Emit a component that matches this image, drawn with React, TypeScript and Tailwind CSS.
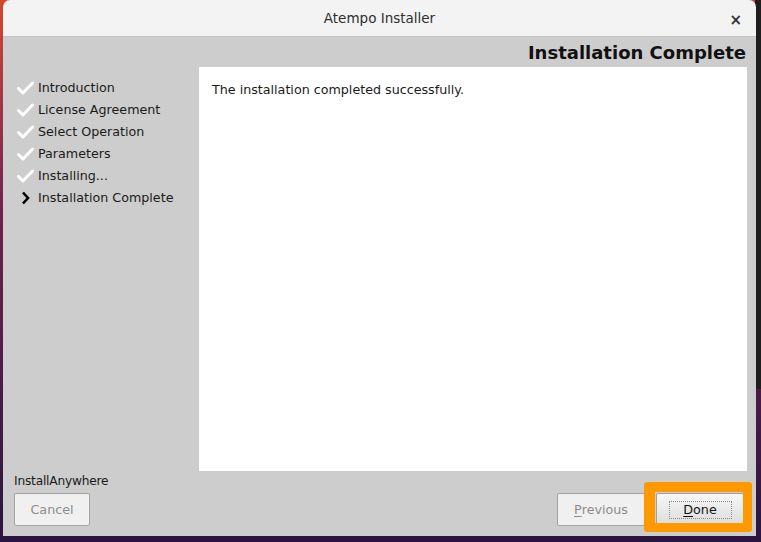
import { ReactNode } from 'react';

const steps = [
    { label: 'Introduction', done: true },
    { label: 'License Agreement', done: true },
    { label: 'Select Operation', done: true },
    { label: 'Parameters', done: true },
    { label: 'Installing...', done: true },
    { label: 'Installation Complete', done: false },
];

const Check = () => (
    <svg width="17" height="14" viewBox="0 0 17 14" className="shrink-0">
        <path d="M1.5 7.5 L6 12 L15.5 2" fill="none" stroke="#ffffff" strokeWidth="3" strokeLinecap="round" strokeLinejoin="round" />
    </svg>
);

const Chevron = () => (
    <svg width="17" height="14" viewBox="0 0 17 14" className="shrink-0">
        <path d="M6 1.5 L11 7 L6 12.5" fill="none" stroke="#000000" strokeWidth="2.6" />
    </svg>
);

// bouton gris désactivé
const FlatButton = ({ children, width }: { children: ReactNode; width: string }) => (
    <div
        className={`flex h-[33px] ${width} items-center justify-center rounded-[2px] border border-[#a3a3a3] bg-[#f0f0f0] text-[12.7px] text-[#8c8c8c]`}
    >
        {children}
    </div>
);

const App = () => {
    return (
        <div className="relative h-[542px] w-[761px] overflow-hidden bg-gradient-to-b from-[#d4472a] via-[#6f1f4f] via-40% to-[#2a1540] font-['DejaVu_Sans',sans-serif]">
            {/* fenêtre derrière */}
            <div className="absolute right-0 top-0 h-[389px] w-[6px] bg-[#1e1e1e]" />

            {/* fenêtre principale */}
            <div className="relative ml-[3px] flex h-[536px] w-[753px] flex-col overflow-hidden rounded-t-[7px]">
                <div className="relative flex h-[37px] shrink-0 items-center justify-center border-b border-[#c4c4c4] bg-[#f3f3f3]">
                    <span className="text-[13.5px] text-[#2e2e2e]">Atempo Installer</span>
                    <span className="absolute right-[14px] top-[9px] text-[15px] font-bold text-[#333333]">×</span>
                </div>

                <div className="flex flex-1 flex-col bg-[#cdcdcd]">
                    <div className="flex h-[30px] items-center justify-end pr-[10px]">
                        <span className="text-[18px] font-bold text-[#111111]">Installation Complete</span>
                    </div>

                    <div className="flex">
                        <div className="w-[196px] pl-[14px] pt-[10px]">
                            {steps.map((s) => (
                                <div key={s.label} className="flex h-[22px] items-center gap-[4px] text-[12.7px] text-[#1a1a1a]">
                                    {s.done ? <Check /> : <Chevron />}
                                    <span>{s.label}</span>
                                </div>
                            ))}
                        </div>
                        <div className="h-[404px] w-[548px] bg-white px-[13px] pt-[14px]">
                            <p className="text-[12.7px] leading-[18px] text-[#1a1a1a]">
                                The installation completed successfully.
                            </p>
                        </div>
                    </div>

                    <div className="px-[11px] pt-[2px]">
                        <div className="h-[16px] text-[12.2px] leading-[16px] tracking-[-0.2px] text-[#1a1a1a]">InstallAnywhere</div>
                        <div className="mt-[4px] flex items-center">
                            <FlatButton width="w-[76px]">Cancel</FlatButton>
                            <div className="ml-auto">
                                <FlatButton width="w-[88px]">
                                    <span className="underline underline-offset-2">P</span>revious
                                </FlatButton>
                            </div>
                            <div className="relative ml-[11px] mr-[1px]">
                                <div className="flex h-[33px] w-[88px] items-center justify-center rounded-[2px] border border-[#a0a0a0] bg-gradient-to-b from-[#f7f7f7] to-[#dcdcdc]">
                                    <div className="flex h-[18px] w-[63px] items-center justify-center border border-dotted border-[#8a8a8a] text-[12.7px] text-[#111111]">
                                        <span className="underline underline-offset-2">D</span>one
                                    </div>
                                </div>
                                <div className="absolute left-[-12px] top-[-11px] h-[50px] w-[108px] rounded-[3px] border-b-[9px] border-l-[11px] border-r-[9px] border-t-[10px] border-[#ff9900]" />
                            </div>
                        </div>
                    </div>
                </div>
            </div>
        </div>
    );
};

export default App;
